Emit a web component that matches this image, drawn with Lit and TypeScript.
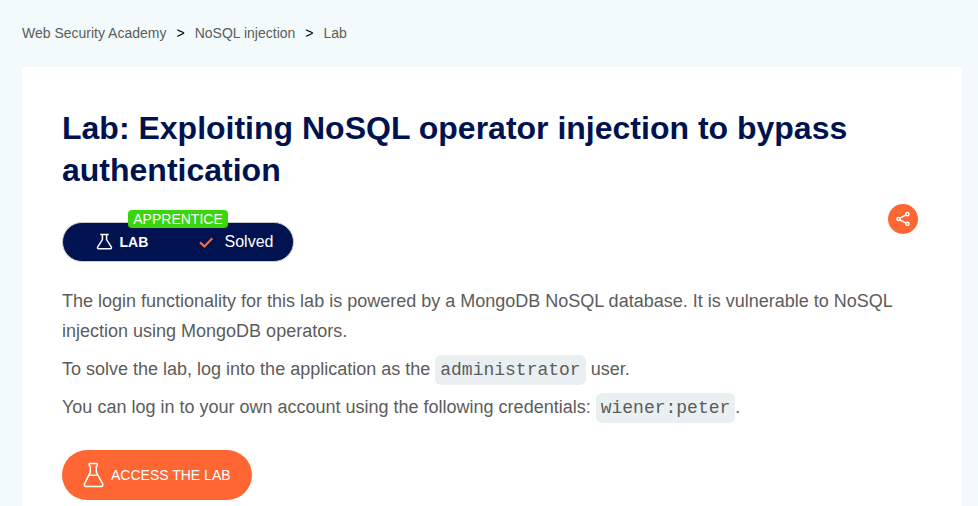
import { LitElement, html, css, svg } from "lit";
import { customElement } from "lit/decorators.js";

@customElement("app-root")
export class AppRoot extends LitElement {
  static styles = css`
    :host {
      display: block;
      box-sizing: border-box;
      height: 506px;
      overflow: hidden;
      padding: 0 16px 0 22px;
      background: #f2fafc;
      color: #5c5c5b;
      font-family: "Liberation Sans", Arial, sans-serif;
    }
    .crumbs {
      display: flex;
      align-items: center;
      gap: 10px;
      box-sizing: border-box;
      height: 67px;
      padding-bottom: 2px;
      font-size: 14px;
      line-height: 16px;
    }
    .sep { color: #000; }
    .card {
      box-sizing: border-box;
      height: 439px;
      padding: 40px 40px 0;
      background: #fff;
    }
    h1 {
      margin: 0;
      color: #001350;
      font-size: 32px;
      line-height: 42px;
      font-weight: 700;
    }
    .meta {
      display: flex;
      justify-content: space-between;
      align-items: flex-start;
      padding: 13px 4px 0 0;
      height: 80px;
      box-sizing: border-box;
    }
    .status {
      position: relative;
      display: flex;
      align-items: center;
      box-sizing: border-box;
      width: 232px;
      height: 40px;
      margin-top: 18px;
      padding-left: 33px;
      border: 1px solid #c3cbce;
      border-radius: 20px;
      background: #001350;
      color: #fff;
    }
    .level {
      position: absolute;
      left: 65px;
      top: -13px;
      width: 100px;
      height: 18px;
      border-radius: 4px;
      background: #3ad50d;
      font-size: 14px;
      line-height: 18px;
      text-align: center;
    }
    .kind {
      width: 79px;
      margin-left: 6.5px;
      font-size: 14px;
      font-weight: 700;
    }
    .solved { margin-left: 11px; font-size: 16px; }
    .share {
      display: flex;
      width: 30px;
      height: 30px;
      border-radius: 50%;
      background: #ff6633;
    }
    svg { display: block; flex: none; }
    p {
      margin: 0 0 8px;
      font-size: 18px;
      line-height: 30px;
    }
    .meta + p { margin-top: 15px; }
    code {
      display: inline-block;
      height: 30px;
      margin: 1px 0 -1px;
      padding: 0 5px;
      border-radius: 6px;
      background: #eaf0f2;
      font-family: "Liberation Mono", monospace;
      font-size: 18px;
      line-height: 30px;
      vertical-align: top;
    }
    .access {
      display: flex;
      align-items: center;
      gap: 7px;
      box-sizing: border-box;
      width: 190px;
      height: 50px;
      margin-top: 28px;
      padding-left: 21px;
      border-radius: 25px;
      background: #ff6633;
      color: #fff;
      font-size: 14px;
      text-decoration: none;
    }
  `;

  render() {
    return html`
      <nav class="crumbs">
        <span>Web Security Academy</span><span class="sep">&gt;</span>
        <span>NoSQL injection</span><span class="sep">&gt;</span>
        <span>Lab</span>
      </nav>
      <main class="card">
        <h1>Lab: Exploiting NoSQL operator injection to bypass authentication</h1>
        <div class="meta">
          <div class="status">
            <span class="level">APPRENTICE</span>
            <svg width="17" height="18" viewBox="0 0 17 18" fill="none" stroke="#fff" stroke-width="1.5" stroke-linejoin="round">
              ${svg`<path d="M4.3 1.6H12.7M6.4 1.8V6.6L1.6 14.2Q1.2 15.7 2.6 15.7H14.4Q15.8 15.7 15.4 14.2L10.6 6.6V1.8"/>`}
            </svg>
            <span class="kind">LAB</span>
            <svg width="15" height="14" viewBox="0 0 15 14" fill="none" stroke="#ff6633" stroke-width="2.2">
              ${svg`<path d="M1 7.4L5.4 11.4L13.3 3.2"/>`}
            </svg>
            <span class="solved">Solved</span>
          </div>
          <div class="share">
            <svg width="30" height="30" viewBox="0 0 30 30" fill="none" stroke="#fff" stroke-width="1.5">
              ${svg`<path d="M12 14.2L17.8 11M12 15.8L17.8 19"/><circle cx="10.5" cy="15" r="1.6"/><circle cx="19.4" cy="10.2" r="1.6"/><circle cx="19.4" cy="19.8" r="1.6"/>`}
            </svg>
          </div>
        </div>
        <p>The login functionality for this lab is powered by a MongoDB NoSQL database. It is vulnerable to NoSQL injection using MongoDB operators.</p>
        <p>To solve the lab, log into the application as the <code>administrator</code> user.</p>
        <p>You can log in to your own account using the following credentials: <code>wiener:peter</code>.</p>
        <a class="access">
          <svg width="21" height="26" viewBox="0 0 21 26" fill="none" stroke="#fff" stroke-width="1.5" stroke-linejoin="round" stroke-linecap="round">
            ${svg`<path d="M6.2 1.6H14.3V3.5L13.3 4.5V10.2L19.5 21.5C20.3 23.2 19.7 24.6 18 24.6H3.2C1.5 24.6 .9 23.2 1.7 21.5L7.3 10.2V4.5L6.2 3.5ZM6 13.2H14.8"/>`}
          </svg>
          <span>ACCESS THE LAB</span>
        </a>
      </main>
    `;
  }
}
